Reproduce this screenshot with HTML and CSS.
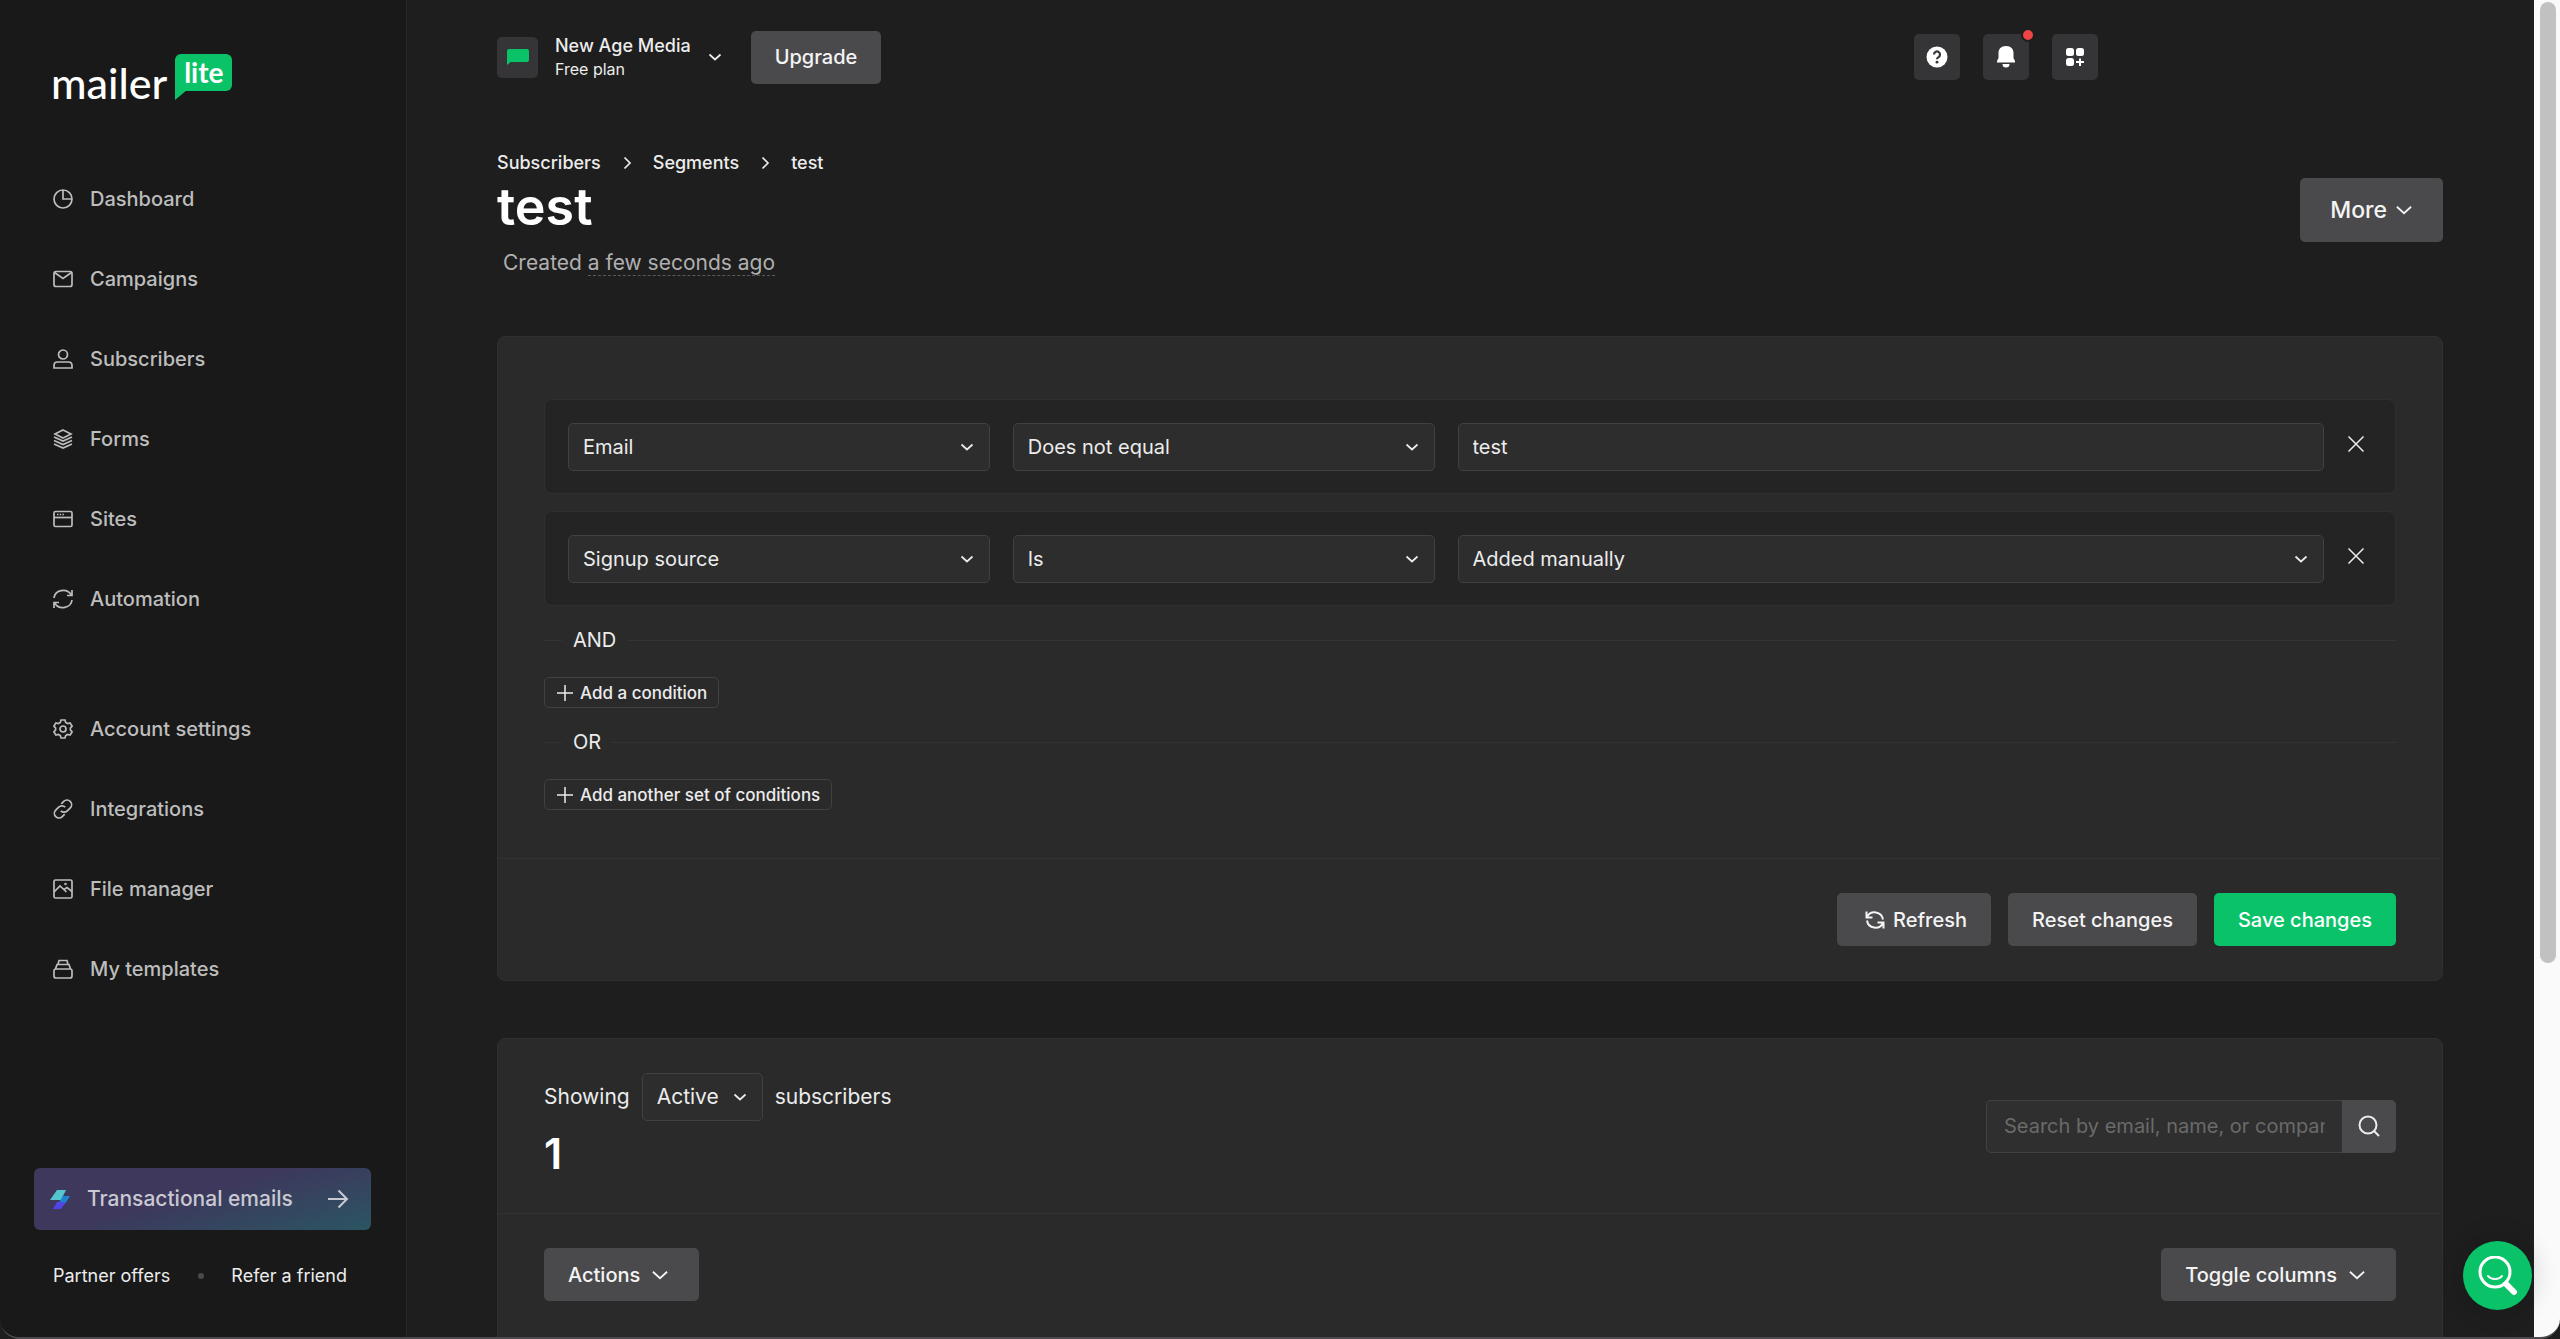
FILE: index.html
```html
<!DOCTYPE html>
<html lang="en">
<head>
  <meta charset="UTF-8">
  <title>test – Segments</title>
  <meta name="viewport" content="width=device-width, initial-scale=1.0">
  <link rel="stylesheet" href="styles.css">
</head>
<body>

  <svg class="sprite" aria-hidden="true">
    <symbol id="chevron" viewBox="0 0 14 14"><path d="M1.5 4.5L7 9.5l5.5-5"/></symbol>
    <symbol id="next" viewBox="0 0 14 14"><path d="M4.500 1.5L10 7l-5.5 5.5"/></symbol>
    <symbol id="close" viewBox="0 0 18 18"><path d="M1.5 1.5l15 15M16.5 1.5l-15 15"/></symbol>
    <symbol id="plus" viewBox="0 0 18 18"><path d="M9 1v16M1 9h16"/></symbol>
    <symbol id="arrow" viewBox="0 0 22 22"><path d="M1 11h19M11.5 2.5L20 11l-8.5 8.5"/></symbol>
  </svg>

  <div class="app">
    <aside class="sidebar">
      <a class="logo" href="#" aria-label="mailerlite">
        <span class="logo-mailer">mailer</span>
        <span class="logo-lite">lite
          <svg class="logo-tail" viewBox="0 0 12 10"><path d="M0 0h12L0 10z"/></svg>
        </span>
      </a>

      <nav class="nav">
        <a href="#">
          <svg viewBox="0 0 20 20"><circle cx="10" cy="10" r="9"/><path d="M10 1v9h9"/></svg>
          Dashboard
        </a>
        <a href="#">
          <svg viewBox="0 0 20 20"><rect x="1" y="2.5" width="18" height="15" rx="2"/><path d="M1.5 3.5l8.500 6 8.500-6"/></svg>
          Campaigns
        </a>
        <a href="#">
          <svg viewBox="0 0 20 20"><circle cx="10" cy="5.5" r="4.5"/><path d="M1 19v-2.500c0-2 1.500-3.500 3.500-3.500h11c2 0 3.500 1.500 3.500 3.500V19z"/></svg>
          Subscribers
        </a>
        <a href="#">
          <svg viewBox="0 0 20 20"><path d="M10 1l8 4-8 4-8-4zM1 8l9 4 9-4M1 11.500l9 4 9-4M1 15l9 4 9-4"/></svg>
          Forms
        </a>
        <a href="#">
          <svg viewBox="0 0 20 20"><rect x="1" y="2.5" width="18" height="15" rx="1.5"/><path d="M1 8.500h18"/><path d="M4 5.500h7" stroke-dasharray="1.5 1.2"/></svg>
          Sites
        </a>
        <a href="#">
          <svg viewBox="0 0 20 20"><path d="M1 9a9.200 8.500 0 0 1 17-3.500M19 1v5.500h-5M19 11a9.200 8.500 0 0 1-17 3.500M1 19v-5.500h5"/></svg>
          Automation
        </a>
      </nav>

      <nav class="nav nav-second">
        <a href="#">
          <svg viewBox="0 0 20 20"><path d="M8 1h4l.7 2.400 2 1.100 2.400-.6 2 3.300L17.400 9v2l1.700 1.800-2 3.300-2.400-.6-2 1.100L12 19H8l-.7-2.400-2-1.100-2.400.6-2-3.300L2.600 11V9L.9 7.200l2-3.300 2.400.6 2-1.100z"/><circle cx="10" cy="10" r="3"/></svg>
          Account settings
        </a>
        <a href="#">
          <svg viewBox="0 0 20 20"><path d="M8.300 4.800l2.400-2.400a4.500 4.500 0 0 1 6.600 6.400l-3 3a4.500 4.500 0 0 1-6.500 0M11.700 15.200l-2.400 2.400a4.500 4.500 0 0 1-6.600-6.400l3-3a4.500 4.500 0 0 1 6.500 0"/></svg>
          Integrations
        </a>
        <a href="#">
          <svg viewBox="0 0 20 20"><rect x="1" y="1" width="18" height="18" rx="1.5"/><path d="M1 13l6-6 6.500 6M11 10.500l3-2 5 4"/><circle cx="12.5" cy="5" r=".5"/></svg>
          File manager
        </a>
        <a href="#">
          <svg viewBox="0 0 20 20"><rect x="1" y="10" width="18" height="9" rx="2"/><path d="M2.500 10l1.500-4.500h12l1.500 4.500M5 5.500L6 1.500h8l1 4"/></svg>
          My templates
        </a>
      </nav>

      <div class="sidebar-bottom">
        <a class="transactional" href="#">
          <svg class="bolt" viewBox="0 0 20 20"><path fill="#56c5d0" d="M7 1h9l-5 10H0z"/><path fill="#1c85cf" d="M13 7h7l-5 8H8z"/><path fill="#5046e5" d="M7 13h9l-5 7H3z"/></svg>
          Transactional emails
          <svg class="arrow"><use href="#arrow"/></svg>
        </a>
        <div class="sidebar-links">
          <a href="#">Partner offers</a>
          <span class="dot"></span>
          <a href="#">Refer a friend</a>
        </div>
      </div>
    </aside>

    <main class="main">
      <header class="topbar">
        <span class="account-icon">
          <svg viewBox="0 0 22 16"><path d="M2 0h18q2 0 2 2v9q0 2-2 2H3.500L0 16V2q0-2 2-2z"/></svg>
        </span>
        <button class="account" type="button">
          <span>
            <span class="account-name">New Age Media</span>
            <span class="account-plan">Free plan</span>
          </span>
          <svg class="icon-sm"><use href="#chevron"/></svg>
        </button>
        <button class="btn" type="button">Upgrade</button>

        <div class="topbar-actions">
          <button class="square" type="button" aria-label="Help">
            <svg viewBox="0 0 22 22"><circle cx="11" cy="11" r="10.5"/><path class="cut" d="M8 8.500a3 3 0 1 1 4.500 2.600c-1 .6-1.500 1-1.500 2.200"/><circle class="cut-dot" cx="11" cy="16.2" r="1.4"/></svg>
          </button>
          <button class="square" type="button" aria-label="Notifications">
            <svg viewBox="0 0 22 22"><path d="M11 0c5 0 7.500 3 7.500 7v5l1.500 3v1.500H2V15l1.500-3V7c0-4 2.500-7 7.500-7zM7.500 18h7a3.500 3.500 0 0 1-7 0z"/></svg>
            <span class="badge"></span>
          </button>
          <button class="square" type="button" aria-label="Apps">
            <svg viewBox="0 0 22 22"><rect x="2" y="2" width="8" height="8" rx="2.5"/><rect x="12" y="2" width="8" height="8" rx="2.5"/><rect x="2" y="12" width="8" height="8" rx="2.5"/><path d="M15 12.500h2v2.500h3v2h-3v3h-2v-3h-3v-2h3z"/></svg>
          </button>
        </div>
      </header>

      <div class="page-head">
        <div>
          <nav class="breadcrumb">
            <a href="#">Subscribers</a>
            <svg class="icon-sm"><use href="#next"/></svg>
            <a href="#">Segments</a>
            <svg class="icon-sm"><use href="#next"/></svg>
            <span>test</span>
          </nav>
          <h1>test</h1>
          <p class="created">Created <span>a few seconds ago</span></p>
        </div>
        <button class="btn btn-large" type="button">More <svg class="icon-md"><use href="#chevron"/></svg></button>
      </div>

      <form class="card">
        <div class="conditions">
          <div class="condition">
            <span class="select">
              <select aria-label="Field"><option>Email</option></select>
              <svg class="icon-sm"><use href="#chevron"/></svg>
            </span>
            <span class="select">
              <select aria-label="Operator"><option>Does not equal</option></select>
              <svg class="icon-sm"><use href="#chevron"/></svg>
            </span>
            <input class="field" type="text" value="test" aria-label="Value">
            <button class="remove" type="button" aria-label="Remove condition"><svg><use href="#close"/></svg></button>
          </div>
          <div class="condition">
            <span class="select">
              <select aria-label="Field"><option>Signup source</option></select>
              <svg class="icon-sm"><use href="#chevron"/></svg>
            </span>
            <span class="select">
              <select aria-label="Operator"><option>Is</option></select>
              <svg class="icon-sm"><use href="#chevron"/></svg>
            </span>
            <span class="select">
              <select aria-label="Value"><option>Added manually</option></select>
              <svg class="icon-sm"><use href="#chevron"/></svg>
            </span>
            <button class="remove" type="button" aria-label="Remove condition"><svg><use href="#close"/></svg></button>
          </div>

          <div class="joiner">AND</div>
          <button class="btn-add" type="button"><svg><use href="#plus"/></svg>Add a condition</button>
          <div class="joiner">OR</div>
          <button class="btn-add" type="button"><svg><use href="#plus"/></svg>Add another set of conditions</button>
        </div>

        <div class="card-footer">
          <button class="btn" type="button">
            <svg class="refresh" viewBox="0 0 20 20"><path d="M1.500 1.500v6h6M2 7a8.500 8.500 0 0 1 16 2.500M18.500 18.500v-6h-6M18 13a8.500 8.500 0 0 1-16-2.500"/></svg>
            Refresh
          </button>
          <button class="btn" type="button">Reset changes</button>
          <button class="btn btn-green" type="submit">Save changes</button>
        </div>
      </form>

      <section class="card">
        <div class="list-head">
          <div>
            <div class="showing">
              <label for="status">Showing</label>
              <span class="select">
                <select id="status"><option>Active</option></select>
                <svg class="icon-sm"><use href="#chevron"/></svg>
              </span>
              subscribers
            </div>
            <div class="count">1</div>
          </div>
          <div class="search">
            <input type="text" placeholder="Search by email, name, or company" aria-label="Search">
            <button type="button" aria-label="Search"><svg viewBox="0 0 22 22"><circle cx="10" cy="10" r="8.5"/><path d="M16 16l5 5"/></svg></button>
          </div>
        </div>
        <div class="list-actions">
          <button class="btn btn-menu" type="button">Actions <svg class="icon-md"><use href="#chevron"/></svg></button>
          <button class="btn btn-menu" type="button">Toggle columns <svg class="icon-md"><use href="#chevron"/></svg></button>
        </div>
      </section>
    </main>

    <div class="scrollbar"><div class="scrollbar-thumb"></div></div>
  </div>

  <button class="helper" type="button" aria-label="Search help">
    <svg viewBox="0 0 40 40"><circle cx="17" cy="16" r="15"/><path class="smile" d="M10 20c3 4 11 4 14 0"/><path class="handle" d="M28 28l8 8"/></svg>
  </button>

</body>
</html>
```
FILE: styles.css
```css
* {
  box-sizing: border-box;
}
body {
  margin: 0;
  background-color: #1e1e1e;
  color: #ececec;
  font-family: Inter, sans-serif;
  font-size: 20px;
  line-height: 24px;
}
a {
  color: inherit;
  text-decoration: none;
}
button, input, select {
  font: inherit;
  color: inherit;
}
button {
  cursor: pointer;
  border: none;
  background: none;
  padding: 0;
}
svg {
  display: block;
  flex: none;
  fill: none;
  stroke: currentColor;
  stroke-width: 2;
}
.sprite {
  position: absolute;
  width: 0;
  height: 0;
}
.icon-sm {
  width: 14px;
  height: 14px;
  stroke-width: 1.7;
}
.icon-md {
  width: 18px;
  height: 18px;
  stroke-width: 1.4;
}

.app {
  display: flex;
  height: 100vh;
  overflow: hidden;
  border-bottom: 2px solid #4c4a4c;
  border-radius: 0 0 20px 20px;
}

/* sidebar */
.sidebar {
  flex: none;
  display: flex;
  flex-direction: column;
  width: 407px;
  background-color: #191919;
  border-right: 1px solid #262626;
}
.logo {
  display: flex;
  align-items: flex-start;
  gap: 8px;
  height: 159px;
  padding: 54px 0 0 51px;
  color: white;
  font-family: Lato, sans-serif;
}
.logo-mailer {
  padding-top: 6px;
  font-size: 43px;
  font-weight: 500;
  line-height: 46px;
}
.logo-lite {
  position: relative;
  width: 57px;
  height: 37px;
  border-radius: 6px 6px 6px 0;
  background-color: #0ac268;
  text-align: center;
  font-size: 28px;
  font-weight: bold;
  line-height: 37px;
}
.logo-tail {
  position: absolute;
  left: 0;
  top: 36px;
  width: 12px;
  height: 10px;
  fill: #0ac268;
  stroke: none;
}
.nav a {
  display: flex;
  align-items: center;
  gap: 17px;
  height: 80px;
  padding-left: 53px;
  color: #bdbdbd;
  font-weight: 500;
}
.nav svg {
  width: 20px;
  height: 20px;
  stroke-width: 1.7;
}
.nav-second {
  margin-top: 50px;
}
.sidebar-bottom {
  margin-top: auto;
  padding: 0 35px 49px 34px;
}
.transactional {
  display: flex;
  align-items: center;
  height: 62px;
  padding: 0 22px 0 16px;
  border-radius: 6px;
  background-image: linear-gradient(165deg, #3d385c 45%, #2b5563);
  color: #c9c9d2;
  font-size: 21px;
  font-weight: 500;
}
.bolt {
  width: 20px;
  height: 20px;
  margin-right: 17px;
  stroke: none;
}
.arrow {
  width: 22px;
  height: 22px;
  margin-left: auto;
}
.sidebar-links {
  display: flex;
  align-items: center;
  justify-content: space-between;
  margin-top: 34px;
  padding: 0 24px 0 19px;
  font-size: 18px;
}
.dot {
  width: 6px;
  height: 6px;
  border-radius: 50%;
  background-color: #4a4a4a;
}

/* main column */
.main {
  flex: 1;
  padding: 30px 91px 0 90px;
}
.topbar {
  display: flex;
  align-items: center;
  height: 54px;
}
.account-icon {
  display: flex;
  align-items: center;
  justify-content: center;
  width: 41px;
  height: 41px;
  margin-right: 17px;
  border-radius: 5px;
  background-color: #353537;
}
.account-icon svg {
  width: 22px;
  height: 16px;
  fill: #0ac268;
  stroke: none;
}
.account {
  display: flex;
  align-items: center;
  gap: 17px;
  margin-right: 29px;
  text-align: left;
}
.account-name {
  display: block;
  font-size: 18px;
  font-weight: 500;
}
.account-plan {
  display: block;
  font-size: 16px;
  line-height: 22px;
}
.btn {
  display: flex;
  align-items: center;
  gap: 8px;
  height: 53px;
  padding: 0 24px;
  border-radius: 5px;
  background-color: #4a4a4c;
  color: #f4f4f4;
  font-weight: 500;
}
.btn-large {
  height: 64px;
  margin-top: 27px;
  padding: 0 30px;
  font-size: 23px;
}
.btn-menu {
  gap: 11px;
  padding-right: 30px;
}
.btn-green {
  background-color: #0ac268;
  color: white;
}
.topbar-actions {
  display: flex;
  gap: 23px;
  margin-left: auto;
  margin-right: 345px;
}
.square {
  position: relative;
  display: flex;
  align-items: center;
  justify-content: center;
  width: 46px;
  height: 46px;
  border-radius: 5px;
  background-color: #353537;
  color: white;
}
.square svg {
  width: 22px;
  height: 22px;
  fill: white;
  stroke: none;
}
.square .cut {
  fill: none;
  stroke: #353537;
  stroke-width: 2.2;
}
.square .cut-dot {
  fill: #353537;
}
.badge {
  position: absolute;
  top: -6px;
  right: -6px;
  width: 14px;
  height: 14px;
  border: 2px solid #1e1e1e;
  border-radius: 50%;
  background-color: #ef4444;
}

.page-head {
  display: flex;
  align-items: flex-start;
  justify-content: space-between;
  margin: 67px 0 61px;
}
.breadcrumb {
  display: flex;
  align-items: center;
  gap: 19px;
  font-size: 18px;
  font-weight: 500;
}
h1 {
  margin: 0 0 12px;
  color: white;
  font-size: 52px;
  font-weight: 600;
  line-height: 64px;
}
.created {
  margin: 0;
  padding-left: 6px;
  color: #b0b0b0;
  font-size: 21px;
}
.created span {
  border-bottom: 1px dashed #5a5a5a;
}

/* cards */
.card {
  margin-bottom: 57px;
  border: 1px solid #303030;
  border-radius: 8px;
  background-color: #2a2a2a;
}
.conditions {
  padding: 62px 46px 31px;
}
.condition {
  display: grid;
  grid-template-columns: 422fr 422fr 867fr 24px;
  align-items: center;
  gap: 23px;
  height: 95px;
  margin-bottom: 17px;
  padding: 0 24px 0 23px;
  border: 1px solid #303030;
  border-radius: 8px;
  background-color: #242424;
}
.field, .select select {
  display: block;
  width: 100%;
  height: 48px;
  padding: 0 14px;
  border: 1px solid #414141;
  border-radius: 5px;
  background-color: #2d2d2d;
  appearance: none;
}
.select {
  position: relative;
  display: block;
}
.select svg {
  position: absolute;
  top: 17px;
  right: 16px;
  pointer-events: none;
}
.remove {
  padding-bottom: 5px;
}
.remove svg {
  width: 18px;
  height: 18px;
  stroke-width: 1.5;
}
.joiner {
  display: flex;
  align-items: center;
  gap: 11px;
  line-height: 34px;
}
.joiner::before, .joiner::after {
  content: "";
  width: 18px;
  height: 1px;
  background-color: #333;
}
.joiner::after {
  flex: 1;
}
.btn-add {
  display: flex;
  align-items: center;
  gap: 6px;
  height: 31px;
  margin: 20px 0 17px;
  padding: 0 11px;
  border: 1px solid #414141;
  border-radius: 5px;
  font-size: 17px;
  font-weight: 500;
}
.btn-add svg {
  width: 18px;
  height: 18px;
  stroke-width: 1.5;
}
.card-footer {
  display: flex;
  justify-content: flex-end;
  gap: 17px;
  padding: 34px 46px;
  border-top: 1px solid #323232;
}
.refresh {
  width: 20px;
  height: 20px;
  margin-left: 4px;
}

.list-head {
  display: flex;
  align-items: center;
  justify-content: space-between;
  height: 174px;
  padding: 0 46px;
}
.showing {
  display: flex;
  align-items: center;
  gap: 12px;
  font-size: 21px;
}
.showing select {
  width: 121px;
}
.count {
  margin-top: 6px;
  color: white;
  font-size: 43px;
  font-weight: 600;
  line-height: 52px;
}
.search {
  display: flex;
  width: 410px;
  height: 53px;
}
.search input {
  flex: 1;
  min-width: 0;
  padding: 0 17px;
  border: 1px solid #414141;
  border-right: none;
  border-radius: 5px 0 0 5px;
  background-color: #2f2f2f;
}
.search input::placeholder {
  color: #6a6a6a;
}
.search button {
  display: flex;
  align-items: center;
  justify-content: center;
  width: 54px;
  border-radius: 0 5px 5px 0;
  background-color: #4a4a4c;
}
.search button svg {
  width: 22px;
  height: 22px;
}
.list-actions {
  display: flex;
  justify-content: space-between;
  padding: 34px 46px 60px;
  border-top: 1px solid #323232;
}

.scrollbar {
  flex: none;
  width: 26px;
  padding: 2px 4px 0 6px;
  background-color: #fafafa;
}
.scrollbar-thumb {
  height: 72%;
  border-radius: 8px;
  background-color: #c1c1c1;
}
.helper {
  position: fixed;
  right: 28px;
  bottom: 29px;
  display: flex;
  align-items: center;
  justify-content: center;
  width: 69px;
  height: 69px;
  border-radius: 50%;
  background-color: #0ac268;
  box-shadow: 0 0 20px 8px rgba(0, 0, 0, .1);
  color: white;
}
.helper svg {
  width: 40px;
  height: 40px;
  stroke-width: 3;
  stroke-linecap: round;
}
.helper .smile {
  stroke-width: 2;
}
.helper .handle {
  stroke-width: 6;
}
```
